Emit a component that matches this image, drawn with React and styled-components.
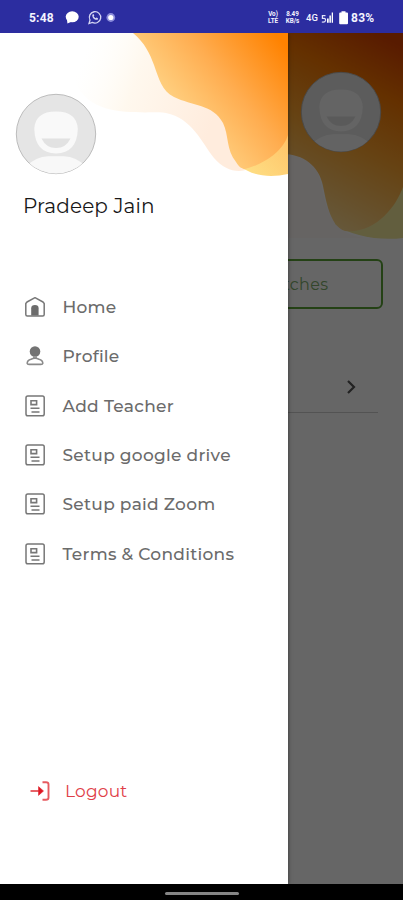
import React from 'react'
import styled, { createGlobalStyle } from 'styled-components'

const menuItems = [
  { label: 'Home', icon: HomeIcon, spacing: 0.2 },
  { label: 'Profile', icon: ProfileIcon, spacing: 0.22 },
  { label: 'Add Teacher', icon: PaperIcon, spacing: 0.33 },
  { label: 'Setup google drive', icon: PaperIcon, spacing: 0.28 },
  { label: 'Setup paid Zoom', icon: PaperIcon, spacing: 0.28 },
  { label: 'Terms & Conditions', icon: PaperIcon, spacing: 0.28 },
]

export default function App() {
  return (
    <Phone>
      <GlobalStyle />
      <StatusBar>
        <Clock>5:48</Clock>
        <LeftStatusIcons />
        <RightStatus>
          <TinyText width={12}>
            <span>Vo)</span>
            <span>LTE</span>
          </TinyText>
          <TinyText width={15}>
            <span>8.49</span>
            <span>KB/s</span>
          </TinyText>
          <Network>4G</Network>
          <SignalIcons />
          <Battery>83%</Battery>
        </RightStatus>
      </StatusBar>
      <Body>
        <Screen>
          <ScreenWave />
          <ScreenHeader>
            <Avatar />
          </ScreenHeader>
          <BatchButton>My Batches</BatchButton>
          <ScreenRow>
            <svg width="10" height="16" viewBox="0 0 10 16" fill="none" stroke="#555" strokeWidth="2.2">
              <path d="M1 2L7 8L1 14" />
            </svg>
          </ScreenRow>
        </Screen>
        <Scrim />
        <Drawer>
          <DrawerWave />
          <DrawerHeader>
            <Avatar />
            <UserName>Pradeep Jain</UserName>
          </DrawerHeader>
          <Menu>
            {menuItems.map(({ label, icon: Icon, spacing }) => (
              <MenuItem key={label} $spacing={spacing}>
                <Icon />
                <span>{label}</span>
              </MenuItem>
            ))}
          </Menu>
          <Logout>
            <LogoutIcon />
            <span>Logout</span>
          </Logout>
        </Drawer>
      </Body>
      <NavBar>
        <NavHandle />
      </NavBar>
    </Phone>
  )
}

function TinyText({ width, children }) {
  return <TinyWrapper $width={width}>{children}</TinyWrapper>
}

function LeftStatusIcons() {
  return (
    <svg width="54" height="18" viewBox="64 8 54 18">
      <ellipse cx="72.2" cy="15.8" rx="6.5" ry="5.5" fill="#fff" />
      <path d="M67 18L67.4 22.6L72 20.5Z" fill="#fff" />
      <path d="M89 22.5L90 19.1A5.7 5.7 0 1 1 92.3 21.4Z" fill="none" stroke="#d5d6f3" strokeWidth="1.3" />
      <path d="M92.3 13.7C92 17 95 19.5 97.8 18.7L98 17.3L96.4 16.5L95.5 17.3L93.7 15.4L94.3 14.5L93.5 13.1Z" fill="#d5d6f3" />
      <circle cx="110.8" cy="16.5" r="4.4" fill="#8b8cdb" />
      <circle cx="110.8" cy="16.5" r="2.6" fill="#fff" />
    </svg>
  )
}

function SignalIcons() {
  return (
    <svg width="28" height="18" viewBox="321 8 28 18">
      <path d="M325.5 14.7H322.4V17.4H324.3Q325.8 17.6 325.6 19.4Q325.2 21.5 321.8 21" fill="none" stroke="#e4e4f8" strokeWidth="1.2" />
      <path d="M327 21.8V17.5H328.7V21.8ZM329.4 21.8V14.5H330.9V21.8ZM331.7 21.8V11.5H333V21.8Z" fill="#fff" />
      <path d="M341.5 10.3H345.5V11.6H347Q348 11.6 348 12.6V22.3Q348 23.3 347 23.3H340.2Q339.2 23.3 339.2 22.3V12.6Q339.2 11.6 340.2 11.6H341.5Z" fill="#fff" />
    </svg>
  )
}

function Avatar() {
  return (
    <svg width="82" height="82" viewBox="0 0 82 82">
      <defs>
        <clipPath id="avatarClip">
          <circle cx="41" cy="41" r="39.6" />
        </clipPath>
      </defs>
      <circle cx="41" cy="41" r="39.7" fill="#e5e5e5" stroke="#b5b5b5" strokeWidth="0.9" />
      <g clipPath="url(#avatarClip)">
        <path d="M10 74Q21 63.5 33 63.2H49Q61 63.5 72 74V84H10Z" fill="#f8f8f8" />
        <path d="M19.3 36Q20 18.5 41 18.5Q62 18.5 62.8 36Q62 60 41 60.5Q20 60 19.3 36Z" fill="#f9f9f9" />
        <path d="M26.5 45.5H55.5Q51 55 41 55Q31 55 26.5 45.5Z" fill="#e2e2e2" />
      </g>
    </svg>
  )
}

function DrawerWave() {
  return (
    <Wave width="228" height="150" viewBox="60 33 228 150">
      <defs>
        <linearGradient id="pale" gradientUnits="userSpaceOnUse" x1="80" y1="65" x2="215" y2="115">
          <stop offset="0" stopColor="#fffdf8" stopOpacity="0" />
          <stop offset="0.4" stopColor="#fff8ee" />
          <stop offset="1" stopColor="#ffecdd" />
        </linearGradient>
        <linearGradient id="yellow" gradientUnits="userSpaceOnUse" x1="250" y1="178" x2="288" y2="140">
          <stop offset="0" stopColor="#fedf85" />
          <stop offset="1" stopColor="#ffc468" />
        </linearGradient>
        <linearGradient id="orange" gradientUnits="userSpaceOnUse" x1="178" y1="128" x2="283" y2="43">
          <stop offset="0" stopColor="#ffd78a" />
          <stop offset="0.5" stopColor="#ffad50" />
          <stop offset="1" stopColor="#ff8200" />
        </linearGradient>
      </defs>
      <path d="M60 33H180L250 168C240 174 225 171 214 158C202 143 192 118 166 113C145 110 92 121 75 82C68 64 72 44 60 33Z" fill="url(#pale)" />
      <path d="M240 166C252 176 270 178 288 174V120H250Z" fill="url(#yellow)" />
      <path d="M133 33C145 43 150 54 154 65C159 79 162 91 174 97C192 106 213 104 223 123C229 135 226 150 236 162C239 167 242 169 245 169C262 165 283 152 288 135V33Z" fill="url(#orange)" />
    </Wave>
  )
}

function ScreenWave() {
  return (
    <Wave width="123" height="220" viewBox="280 33 123 220">
      <defs>
        <linearGradient id="screenOrange" gradientUnits="userSpaceOnUse" x1="305" y1="225" x2="400" y2="45">
          <stop offset="0" stopColor="#ffe4a0" />
          <stop offset="0.45" stopColor="#ffa832" />
          <stop offset="0.75" stopColor="#f97800" />
          <stop offset="1" stopColor="#dd4400" />
        </linearGradient>
      </defs>
      <path d="M280 150L300 154C324 165 318 187 330 215C337 228 348 236 365 238H280Z" fill="#fffbf8" />
      <path d="M335 224C350 236 380 241 403 238V150H350Z" fill="#f5ea9c" />
      <path d="M280 33V154C302 153 319 165 323 186C327 206 331 226 345 231C375 234 396 207 403 187V33Z" fill="url(#screenOrange)" />
    </Wave>
  )
}

function HomeIcon() {
  return (
    <svg width="22" height="24" viewBox="0 0 22 24" fill="none" stroke="#777" strokeWidth="1.5">
      <path d="M1.8 8.5L3 7L11 2.7L19 7L20.2 8.5V19.5Q20.2 21 18.7 21H3.3Q1.8 21 1.8 19.5Z" strokeLinejoin="round" />
      <path d="M7.2 20.5V13.3Q7.2 10 11 10Q14.6 10 14.6 13.3V20.5Z" fill="#6c6c6c" stroke="none" />
    </svg>
  )
}

function ProfileIcon() {
  return (
    <svg width="22" height="24" viewBox="0 0 22 24" fill="none" stroke="#8a8a8a" strokeWidth="1.6">
      <circle cx="11" cy="7.6" r="5.3" fill="#737373" stroke="none" />
      <path d="M9 12H13V14H9Z" fill="#999" stroke="none" />
      <path d="M7 15.2Q11 13.2 15 15.2Q18.8 16.3 18.8 19.3Q18.6 20.4 17 20.4H5Q3.4 20.4 3.2 19.3Q3.2 16.3 7 15.2Z" />
    </svg>
  )
}

function PaperIcon() {
  return (
    <svg width="22" height="24" viewBox="0 0 22 24" fill="none" stroke="#777" strokeWidth="1.5">
      <rect x="2" y="2" width="18.2" height="19.8" rx="1.8" />
      <path d="M7 6.8H12.6V10.6H7ZM6.5 14.2H15.5M7.5 18H15.5" strokeWidth="1.6" />
    </svg>
  )
}

function LogoutIcon() {
  return (
    <svg width="22" height="24" viewBox="0 0 22 24" fill="none" stroke="#e65b60" strokeWidth="1.9">
      <path d="M13.5 3.2H17Q19.5 3.2 19.5 5.2V18.8Q19.5 20.8 17 20.8H13.5" />
      <path d="M1.5 12H11" />
      <path d="M9.5 7.6L14.5 12L9.5 16.4Z" fill="#df1723" stroke="#df2933" strokeWidth="0.6" />
    </svg>
  )
}

const GlobalStyle = createGlobalStyle`
  body {
    margin: 0;
    overflow: hidden;
  }
  svg {
    display: block;
    flex-shrink: 0;
  }
`

const Phone = styled.div`
  width: 403px;
  height: 900px;
  display: flex;
  flex-direction: column;
  background: #fff;
  font-family: Montserrat, Inter, sans-serif;
`

const StatusBar = styled.header`
  height: 33px;
  box-sizing: border-box;
  padding: 2px 28px 0 29px;
  display: flex;
  align-items: center;
  background: #2c2da0;
  color: #f4f4ff;
  font-family: Roboto, sans-serif;
`

const Clock = styled.span`
  width: 35px;
  font-size: 12px;
  font-weight: 700;
  letter-spacing: 0.2px;
`

const RightStatus = styled.div`
  display: flex;
  align-items: center;
  margin-left: auto;
`

const TinyWrapper = styled.div`
  width: ${props => props.$width}px;
  margin-right: 6px;
  display: flex;
  flex-direction: column;
  align-items: center;
  font-size: 6.3px;
  line-height: 7px;
  font-weight: 700;
`

const Network = styled.span`
  width: 15px;
  font-size: 9.5px;
  font-weight: 500;
`

const Battery = styled.span`
  width: 24px;
  margin-left: 2px;
  font-size: 12px;
  font-weight: 700;
  letter-spacing: 0.3px;
`

const Body = styled.div`
  position: relative;
  height: 851px;
  overflow: hidden;
`

const Screen = styled.div`
  height: 100%;
  box-sizing: border-box;
  padding: 0 20px;
  display: flex;
  flex-direction: column;
  background: #fff;
`

const Wave = styled.svg`
  position: absolute;
  top: 0;
  right: 0;
`

const ScreenHeader = styled.div`
  position: relative;
  height: 226px;
  box-sizing: border-box;
  padding: 37.5px 1px 0 0;
  display: flex;
  justify-content: flex-end;
`

const BatchButton = styled.button`
  width: 180px;
  height: 50px;
  box-sizing: border-box;
  align-self: flex-end;
  padding: 0 52.5px 0 0;
  border: 2px solid #5aa336;
  border-radius: 6px;
  background: #fff;
  color: #7fae6c;
  font-family: inherit;
  font-size: 16px;
  letter-spacing: 0.4px;
  text-align: right;
`

const ScreenRow = styled.div`
  height: 104px;
  box-sizing: border-box;
  margin-right: 5px;
  padding: 70px 21px 0 0;
  display: flex;
  justify-content: flex-end;
  border-bottom: 1px solid #d0d0d0;
`

const Scrim = styled.div`
  position: absolute;
  inset: 0;
  background: rgba(0, 0, 0, 0.6);
`

const Drawer = styled.aside`
  position: absolute;
  inset: 0 auto 0 0;
  width: 287.5px;
  display: flex;
  flex-direction: column;
  background: #fff;
  box-shadow: 0 0 4px rgba(0, 0, 0, 0.5);
`

const DrawerHeader = styled.div`
  position: relative;
  height: 249.5px;
  box-sizing: border-box;
  padding: 60px 15px 0;
`

const UserName = styled.h1`
  margin: 18px 0 0 8px;
  font-size: 20px;
  line-height: 26px;
  font-weight: 400;
  letter-spacing: 0.12px;
  color: #181818;
  white-space: nowrap;
`

const Menu = styled.nav`
  display: flex;
  flex-direction: column;
`

const MenuItem = styled.a`
  height: 49.3px;
  padding-left: 24px;
  display: flex;
  align-items: center;
  gap: 16.5px;
  font-size: 17px;
  font-weight: 500;
  letter-spacing: ${props => props.$spacing}px;
  color: #6b6b6b;
  white-space: nowrap;
`

const Logout = styled.a`
  margin: auto 0 81px;
  padding-left: 29px;
  display: flex;
  align-items: center;
  gap: 14px;
  font-size: 17px;
  letter-spacing: 0.2px;
  color: #df3e48;
`

const NavBar = styled.footer`
  height: 16px;
  display: flex;
  align-items: center;
  justify-content: center;
  background: #000;
`

const NavHandle = styled.div`
  width: 74px;
  height: 3px;
  margin-top: 2px;
  border-radius: 2px;
  background: #858585;
`
